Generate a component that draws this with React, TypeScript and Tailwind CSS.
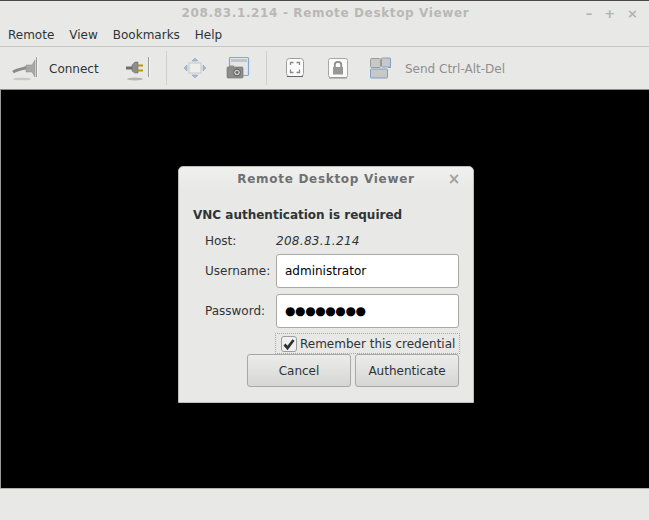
import React from 'react'

const font = { fontFamily: '"DejaVu Sans", sans-serif' }

const PlugOut = () => (
  <svg width="28" height="26" viewBox="0 0 28 26">
    <ellipse cx="10" cy="24" rx="9" ry="1.3" fill="#c8c8c6" />
    <path d="M1 17 C6 14 10 14 15 12.5" stroke="#8a8a88" strokeWidth="3" fill="none" />
    <path d="M14 10 H20 L23 5 V22 L20 17 H14 Z" fill="#a8a8a6" stroke="#8c8c8a" strokeWidth="0.5" />
    <path d="M24.5 2 V22" stroke="#9a9a98" strokeWidth="1" />
    <path d="M25.5 2 V22" stroke="#f4f4f2" strokeWidth="1" />
  </svg>
)

const PlugIn = () => (
  <svg width="26" height="26" viewBox="0 0 26 26">
    <ellipse cx="10" cy="24" rx="8" ry="1.5" fill="#b4b4b2" />
    <path d="M1 13 H8" stroke="#6e6e6c" strokeWidth="3" />
    <path d="M7 10 L10 7 H13 V18 H10 L7 16 Z" fill="#8e8e8c" stroke="#5e5e5c" strokeWidth="0.5" />
    <path d="M13 10.5 H18 M13 15.5 H18" stroke="#b8960c" strokeWidth="2" />
    <path d="M23.5 2 V22" stroke="#9a9a98" strokeWidth="1" />
    <path d="M24.5 2 V22" stroke="#f4f4f2" strokeWidth="1" />
  </svg>
)

const Move = () => (
  <svg width="24" height="24" viewBox="0 0 24 24">
    <rect x="6" y="7" width="12" height="10" fill="#eeeeec" stroke="#c6c6c4" />
    <path d="M12 2 L15 5 H9 Z M12 22 L15 19 H9 Z M1 12 L4 9 V15 Z M23 12 L20 9 V15 Z" fill="#a7bcd8" stroke="#8aa4c8" strokeWidth="0.6" />
  </svg>
)

const Shot = () => (
  <svg width="24" height="24" viewBox="0 0 24 24">
    <rect x="3.5" y="1.5" width="19" height="18" rx="1" fill="#e4e6e8" stroke="#88a6cc" strokeWidth="1.2" />
    <rect x="5" y="3" width="16" height="3" fill="#c4c4c4" />
    <rect x="1" y="11" width="16" height="11" rx="1" fill="#8c8c8a" stroke="#6c6c6a" strokeWidth="0.6" />
    <rect x="3" y="9.5" width="5" height="2" fill="#8c8c8a" />
    <circle cx="11" cy="16.5" r="3.4" fill="#cfcfcd" stroke="#555" />
    <circle cx="11" cy="16.5" r="1.4" fill="#666" />
  </svg>
)

const Fullscreen = () => (
  <svg width="18" height="20" viewBox="0 0 18 20">
    <rect x="0.5" y="0.5" width="17" height="18" rx="3" fill="#fbfbfb" stroke="#9c9c9a" />
    <path d="M1 18.5 H17" stroke="#666" />
    <path d="M4.5 7 V4.5 H7.5 M10.5 4.5 H13.5 V7 M4.5 11.5 V14.5 H7.5 M10.5 14.5 H13.5 V11.5" stroke="#888886" strokeWidth="1.3" fill="none" />
  </svg>
)

const Lock = () => (
  <svg width="20" height="21" viewBox="0 0 20 21">
    <rect x="0.5" y="0.5" width="19" height="19" rx="2" fill="#fbfbfb" stroke="#a6a6a4" />
    <path d="M1 20 H19" stroke="#8e8e8c" />
    <path d="M6.8 9 V6.5 C6.8 3 13.2 3 13.2 6.5 V9" stroke="#8c8c8a" strokeWidth="1.8" fill="none" />
    <rect x="5" y="9" width="10" height="7.5" fill="#989896" />
  </svg>
)

const Keys = () => (
  <svg width="22" height="22" viewBox="0 0 22 22">
    <rect x="0.5" y="1.5" width="10" height="9" rx="1" fill="#c8c8c6" stroke="#9a9a98" />
    <rect x="11.5" y="1" width="9" height="9" rx="1" fill="#c8c8c6" stroke="#7f9fc8" />
    <rect x="0.5" y="12" width="17" height="9" rx="1" fill="#c8c8c6" stroke="#7f9fc8" />
    <path d="M18 10 H21 V11 H18 Z" fill="#7f9fc8" />
  </svg>
)

const Sep = () => <div className="w-px h-[34px] bg-[#cfcfcd]" />

export default function App() {
  return (
    <div className="relative w-[649px] h-[520px] flex flex-col overflow-hidden bg-[#e8e8e7] text-[12px] text-[#2e3436]" style={font}>
      {/* Title bar */}
      <div className="h-[21px] flex items-center border-t border-[#4a4a4a] relative">
        <div className="w-full text-center font-bold tracking-[0.64px] text-[#b8b8b6] pt-1 pl-[2px]">208.83.1.214 - Remote Desktop Viewer</div>
        <div className="absolute right-[11px] top-[4px] flex gap-[12px] font-bold text-[#b2b2b0] text-[13px] leading-[18px]">
          <span>–</span>
          <span>+</span>
          <span>×</span>
        </div>
      </div>

      {/* Menu */}
      <div className="h-[23px] flex items-center gap-[15px] px-[8px] pt-[2px] box-content border-b border-[#c6c6c4]">
        <span>Remote</span>
        <span>View</span>
        <span>Bookmarks</span>
        <span>Help</span>
      </div>

      {/* Toolbar */}
      <div className="h-[42px] flex items-center pl-[12px] border-b border-[#8c8c8a] box-content">
        <PlugOut />
        <span className="ml-[9px] w-[76px] pt-px">Connect</span>
        <PlugIn />
        <div className="ml-[15px]"><Sep /></div>
        <div className="ml-[16px]"><Move /></div>
        <div className="ml-[19px]"><Shot /></div>
        <div className="ml-[16px]"><Sep /></div>
        <div className="ml-[19px]"><Fullscreen /></div>
        <div className="ml-[24px]"><Lock /></div>
        <div className="ml-[22px]"><Keys /></div>
        <span className="ml-[13px] pt-px text-[#8f8f8d]">Send Ctrl-Alt-Del</span>
      </div>

      {/* Remote screen */}
      <div className="flex-1 bg-black border-l border-[#9a9a98]" />

      {/* Status bar */}
      <div className="h-[32px] border-t border-[#b0b0ae]" />

      {/* Auth dialog */}
      <div className="absolute left-[178px] top-[166px] w-[296px] h-[237px] rounded-t-[5px] bg-[#e8e8e7] border border-[#bcbcba] px-[14px]">
        <div className="relative h-[24px] -mx-[14px] flex items-center justify-center font-bold tracking-[0.7px] text-[#6f7173] bg-gradient-to-b from-[#f0f0ef] to-[#e8e8e7] rounded-t-[5px]">
          Remote Desktop Viewer
          <span className="absolute right-[12px] top-[1px] font-bold text-[#a0a09e] text-[15px]">×</span>
        </div>
        <div className="mt-[16px] font-bold leading-[16px]">VNC authentication is required</div>
        <div className="mt-[10px] h-[16px] flex items-center pl-[12px]">
          <span className="w-[71px]">Host:</span>
          <span className="italic tracking-[0.3px]">208.83.1.214</span>
        </div>
        <div className="mt-[5px] flex items-center pl-[12px]">
          <span className="w-[71px]">Username:</span>
          <div className="w-[183px] h-[34px] flex items-center px-[8px] bg-white border border-[#a8a8a6] rounded-[3px] text-black">administrator</div>
        </div>
        <div className="mt-[6px] flex items-center pl-[12px]">
          <span className="w-[71px]">Password:</span>
          <div className="w-[183px] h-[34px] flex items-center px-[8px] bg-white border border-[#a8a8a6] rounded-[3px] text-black tracking-[-0.4px]">●●●●●●●●</div>
        </div>
        <div className="mt-[5px] ml-[82px] w-[185px] h-[21px] flex items-center gap-[3px] pl-[5px] border border-dotted border-[#a8a8a6] whitespace-nowrap">
          <div className="w-[16px] h-[16px] shrink-0 flex items-center justify-center bg-[#f0f0ef] border border-[#9c9c9a] rounded-[3px]">
            <svg width="12" height="12" viewBox="0 0 12 12">
              <path d="M1.5 6.5 L4.5 10 L10.5 2" stroke="#2e3436" strokeWidth="2.8" fill="none" />
            </svg>
          </div>
          <span>Remember this credential</span>
        </div>
        <div className="ml-[54px] flex gap-[4px]">
          <button className="w-[104px] h-[33px] border border-[#a8a8a6] rounded-[3px] bg-gradient-to-b from-[#ececeb] to-[#d6d6d4]">Cancel</button>
          <button className="w-[104px] h-[33px] border border-[#a8a8a6] rounded-[3px] bg-gradient-to-b from-[#ececeb] to-[#d6d6d4]">Authenticate</button>
        </div>
      </div>
    </div>
  )
}
